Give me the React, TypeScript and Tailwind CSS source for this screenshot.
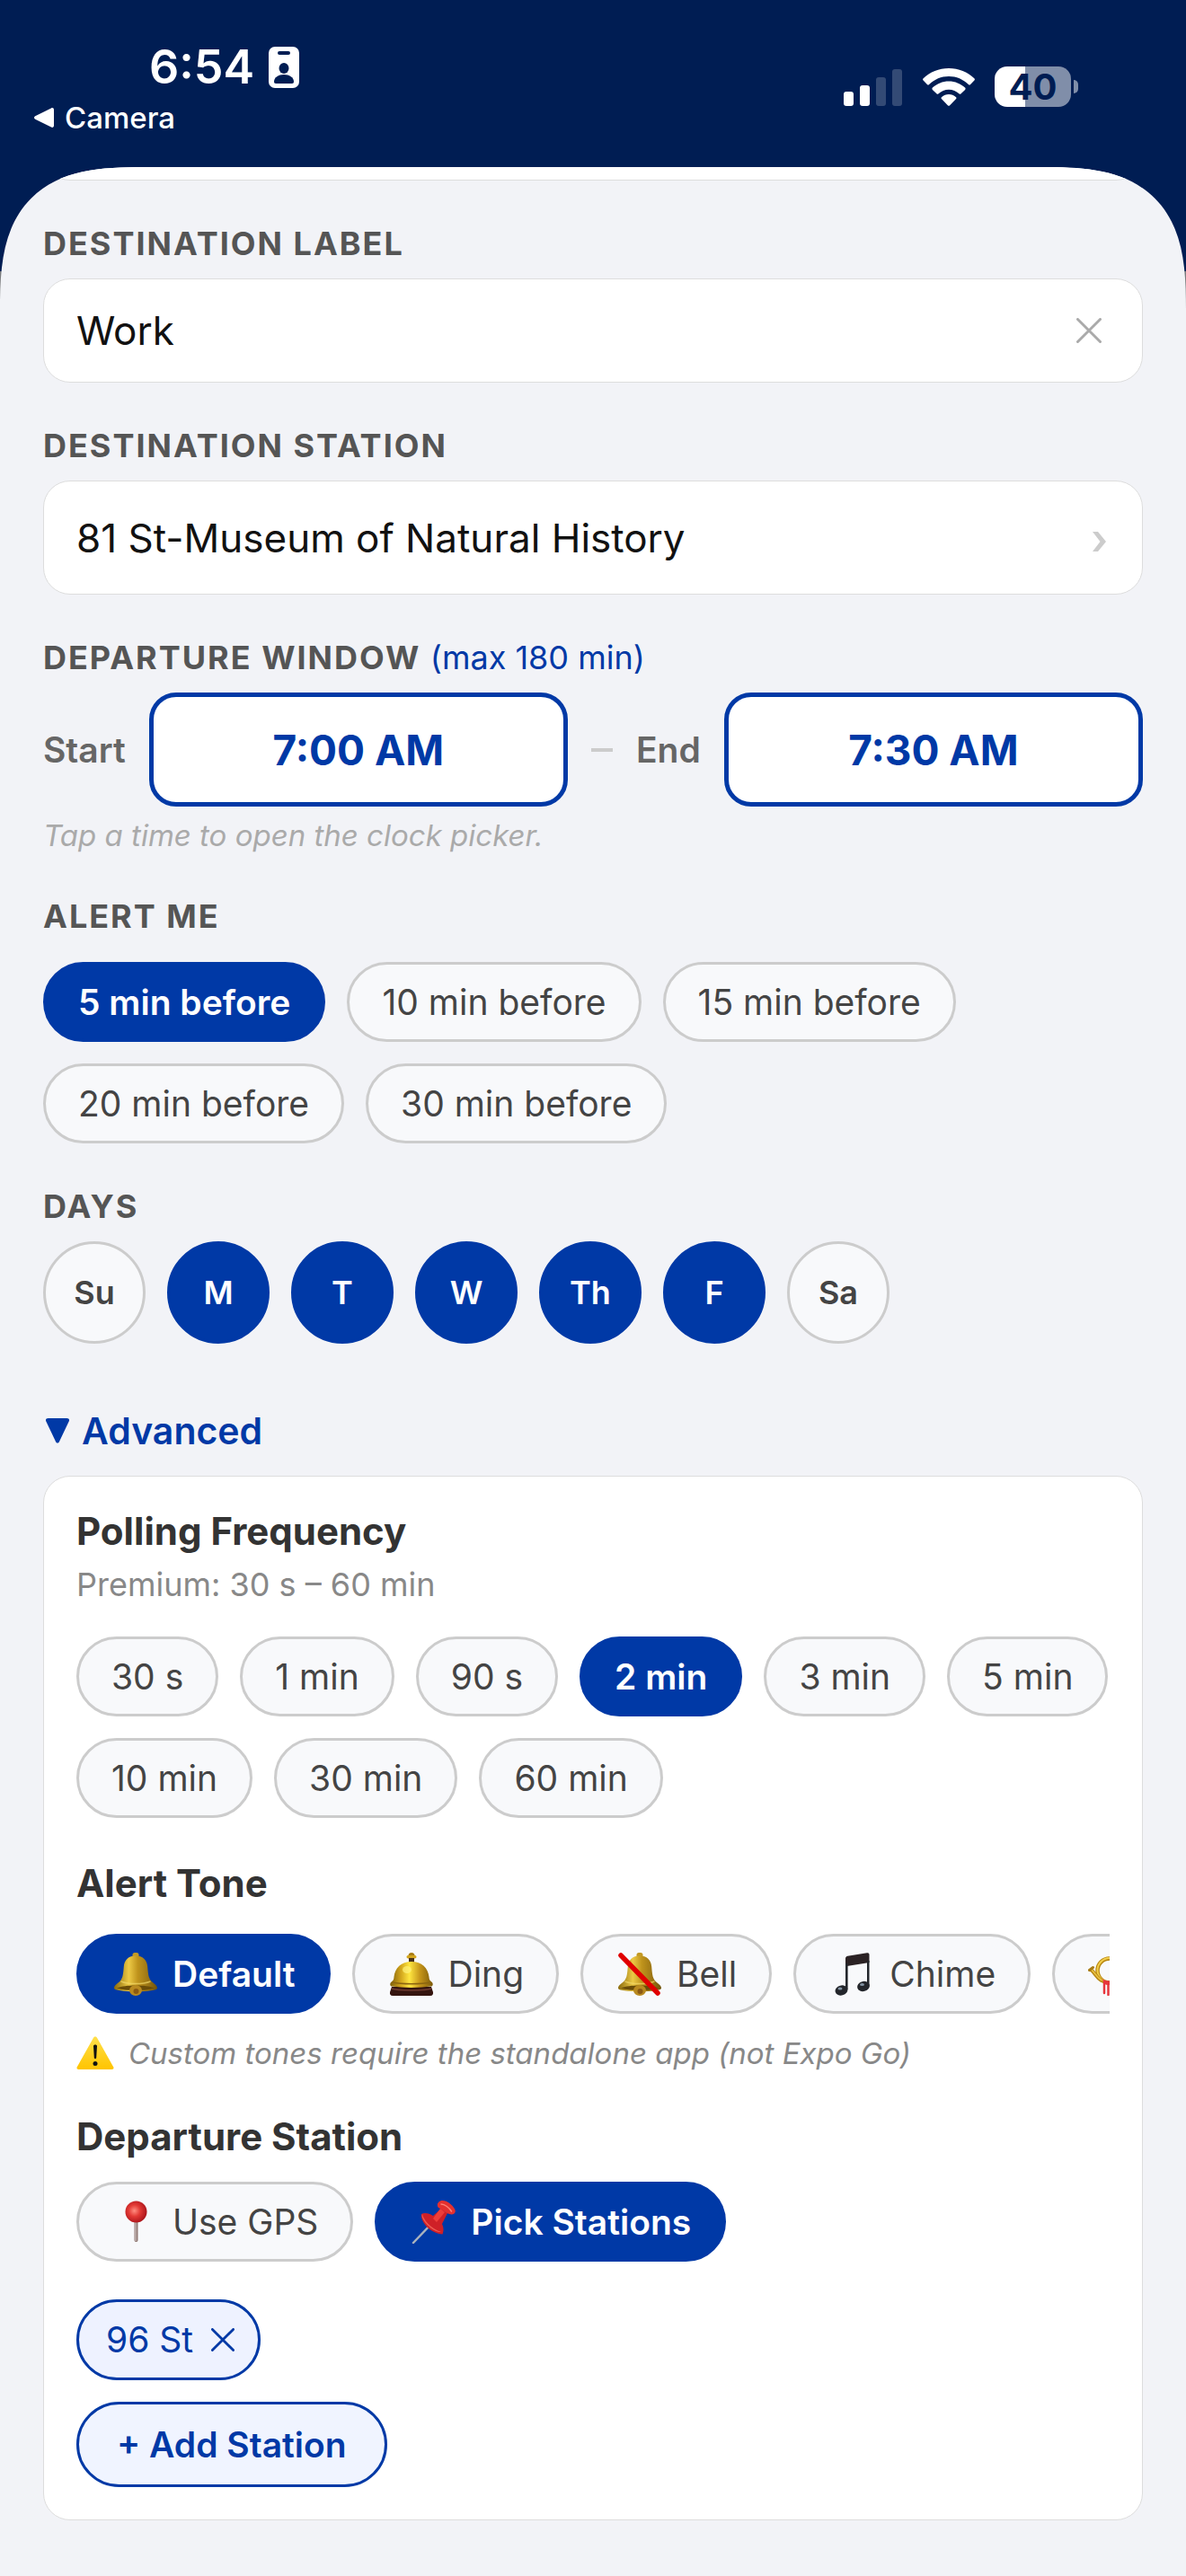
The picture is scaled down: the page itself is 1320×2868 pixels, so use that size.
import React, { useState } from "react";
import clsx from "clsx";

const ALERTS = ["5 min before", "10 min before", "15 min before", "20 min before", "30 min before"];
const DAYS = ["Su", "M", "T", "W", "Th", "F", "Sa"];
const FREQUENCIES = ["30 s", "1 min", "90 s", "2 min", "3 min", "5 min", "10 min", "30 min", "60 min"];

function BadgeIcon() {
  return (
    <svg width="34" height="46" viewBox="0 0 34 46" aria-hidden="true">
      <rect width="34" height="46" rx="7" fill="#fff" />
      <rect x="10" y="5" width="14" height="4" rx="2" fill="#001d53" />
      <ellipse cx="17" cy="24" rx="5.500" ry="6" fill="#001d53" />
      <path d="M6 39c0-5 5-8 11-8s11 3 11 8c0 1-.6 2-2 2H8c-1.400 0-2-1-2-2z" fill="#001d53" />
    </svg>
  );
}

function SignalIcon() {
  return (
    <svg width="65" height="42" viewBox="0 0 65 42" aria-hidden="true" fill="#fff">
      <rect x="0" y="26" width="11" height="16" rx="3" />
      <rect x="18" y="19" width="11" height="23" rx="3" />
      <rect x="36" y="10" width="11" height="32" rx="3" opacity=".2" />
      <rect x="54" y="1" width="11" height="41" rx="3" opacity=".2" />
    </svg>
  );
}

function WifiIcon() {
  return (
    <svg width="58" height="42" viewBox="0 0 58 42" aria-hidden="true" fill="#fff">
      <path d="M29 0C18 0 8 4.200.7 11.300c-.8.8-.8 1.500-.1 2.300l4.300 4.400c.7.700 1.500.7 2.200 0C13 12.300 20.600 9 29 9s16 3.300 21.900 9c.7.700 1.500.7 2.200 0l4.300-4.400c.7-.8.7-1.500-.1-2.300C50 4.200 40 0 29 0z" />
      <path d="M29 14.500c-7 0-13.300 2.700-18 7.100-.8.800-.8 1.500-.1 2.300l4.500 4.400c.7.700 1.400.7 2.200 0 3-2.800 7-4.600 11.400-4.600s8.400 1.800 11.400 4.600c.8.700 1.500.7 2.200 0l4.500-4.400c.7-.8.7-1.500-.1-2.300-4.700-4.400-11-7.100-18-7.100z" />
      <path d="M29 29c-3 0-5.700 1.100-7.800 2.900-.9.800-.9 1.600-.1 2.400l6.700 6.900c.8.800 1.600.8 2.400 0l6.700-6.900c.8-.8.8-1.600-.1-2.400C34.700 30.100 32 29 29 29z" />
    </svg>
  );
}

function CrossIcon({ size, stroke }: { size: number; stroke: number }) {
  return (
    <svg width={size} height={size} viewBox="0 0 28 28" aria-hidden="true" fill="none" stroke="currentColor" strokeWidth={stroke} strokeLinecap="round">
      <path d="M1.500 1.500l25 25M26.500 1.500l-25 25" />
    </svg>
  );
}

function BellIcon({ muted = false }: { muted?: boolean }) {
  const id = muted ? "bell-muted" : "bell";
  return (
    <svg width="48" height="48" viewBox="0 0 48 48" aria-hidden="true">
      <defs>
        <linearGradient id={id} x1="0" x2="1">
          <stop offset="0" stopColor="#8a6a0c" />
          <stop offset=".34" stopColor="#ecc945" />
          <stop offset=".55" stopColor="#bf931c" />
          <stop offset=".8" stopColor="#9a7414" />
          <stop offset="1" stopColor="#6f520a" />
        </linearGradient>
      </defs>
      <rect x="20.500" y="0" width="7" height="6" rx="2.500" fill="#c39a24" />
      <path d="M24 3.500c8 0 12.500 4.500 13.200 12 .6 7 .9 12 3.600 15.500 2.200 3 7.200 5 7.200 8.500 0 2.500-11 3.800-24 3.800S0 42 0 39.500C0 36 5 34 7.200 31c2.700-3.500 3-8.500 3.600-15.500.7-7.500 5.200-12 13.200-12z" fill={`url(#${id})`} />
      <path d="M3 39.500c6-2.300 12-3 21-3s15 .7 21 3c-6 1.800-12 2.500-21 2.500s-15-.7-21-2.500z" fill="#6b4d08" />
      <path d="M7.500 32c5 2 10 2.600 16.500 2.600S35.500 34 40.500 32" fill="none" stroke="#f1d768" strokeWidth="1.500" opacity=".7" />
      <ellipse cx="24" cy="42" rx="7" ry="6" fill="#b98a20" />
      <circle cx="24.500" cy="43" r="3" fill="#8b5a14" />
      {muted && <path d="M3 3l41 42" stroke="#e00000" strokeWidth="5.500" strokeLinecap="round" />}
    </svg>
  );
}

function DingIcon() {
  return (
    <svg width="50" height="48" viewBox="0 0 50 48" aria-hidden="true">
      <defs>
        <linearGradient id="ding" x1="0" x2="1">
          <stop offset="0" stopColor="#7f6008" />
          <stop offset=".25" stopColor="#d2a51c" />
          <stop offset=".45" stopColor="#ffe640" />
          <stop offset=".7" stopColor="#c5951a" />
          <stop offset="1" stopColor="#7c5a0a" />
        </linearGradient>
      </defs>
      <circle cx="25" cy="3.500" r="3.500" fill="#a87c10" />
      <rect x="19.500" y="3" width="11" height="3.500" rx="1.700" fill="#d3a51d" />
      <rect x="22" y="6" width="6" height="6" fill="#47301a" />
      <path d="M3 38h44l2 6c.4 2-.6 4-3 4H4c-2.400 0-3.400-2-3-4z" fill="#35150f" />
      <path d="M3 40c6 2.500 38 2.500 44 0" stroke="#6d3a30" strokeWidth="1.500" fill="none" />
      <path d="M25 10c11.500 0 18.500 7 19.500 17 .2 3 .8 4 2.500 5.200 2.600 1.800 2.200 5-.5 5.400-12 1.700-31 1.700-43 0C.8 37.200.4 34 3 32.200c1.700-1.200 2.300-2.200 2.500-5.200 1-10 8-17 19.500-17z" fill="url(#ding)" />
      <path d="M3.500 33c10 2.300 33 2.300 43 0" stroke="#8b6510" strokeWidth="1.500" fill="none" />
      <ellipse cx="20" cy="19" rx="5" ry="4" fill="#fff27a" opacity=".7" />
    </svg>
  );
}

function ChimeIcon() {
  return (
    <svg width="46" height="48" viewBox="0 0 46 48" aria-hidden="true" fill="#23262b">
      <path d="M15 6.500C15 5 16 4 17.500 3.700L39 .2c1.500-.3 2.500.4 2.500 2V11L15 15.200z" fill="#2b2224" />
      <path d="M15 12h2.600v29H15zM39 9h2.500v28H39z" />
      <ellipse cx="10.500" cy="42" rx="7" ry="5.500" transform="rotate(-15 10.500 42)" />
      <ellipse cx="35" cy="37.500" rx="7" ry="5.500" transform="rotate(-15 35 37.500)" />
      <ellipse cx="9" cy="40" rx="2.500" ry="1.500" fill="#8393a3" />
      <ellipse cx="33.500" cy="35.500" rx="2.500" ry="1.500" fill="#8393a3" />
    </svg>
  );
}

function HornIcon() {
  return (
    <svg width="52" height="48" viewBox="0 0 52 48" aria-hidden="true" fill="none">
      <path d="M37 26l13 8V12z" fill="#d9a526" />
      <circle cx="24" cy="20" r="13.500" stroke="#b8860f" strokeWidth="4.500" />
      <circle cx="24" cy="19.500" r="13.500" stroke="#f2cf4d" strokeWidth="2" />
      <path d="M2.500 18.500c5 3 6 9 13 13" stroke="#b88716" strokeWidth="4" />
      <path d="M2.500 18c5 3 6 9 13 13" stroke="#ebc443" strokeWidth="1.500" />
      <path d="M1.500 19.500l4-3" stroke="#a87c14" strokeWidth="3" strokeLinecap="round" />
      <path d="M16 29.500c4 2.500 12 2.500 16 0l-1.500 5.500c-4 1.500-9 1.500-13-.5z" fill="#e6353c" />
      <path d="M18 34v11M22.500 35v12M27 35v11" stroke="#e6353c" strokeWidth="2.500" strokeLinecap="round" />
    </svg>
  );
}

function RoundPinIcon() {
  return (
    <svg width="48" height="48" viewBox="0 0 48 48" aria-hidden="true">
      <defs>
        <radialGradient id="round-pin" cx=".42" cy=".45" r=".6">
          <stop offset="0" stopColor="#ff8d80" />
          <stop offset=".45" stopColor="#e33a35" />
          <stop offset="1" stopColor="#a81219" />
        </radialGradient>
      </defs>
      <path d="M22.500 20h4v24c0 1.500-1 2-2 2s-2-.5-2-2z" fill="#917b76" />
      <path d="M24 22v23" stroke="#d8cfcc" strokeWidth="1" />
      <circle cx="24.500" cy="12.500" r="12" fill="url(#round-pin)" />
    </svg>
  );
}

function PushPinIcon() {
  return (
    <svg width="50" height="48" viewBox="0 0 50 48" aria-hidden="true">
      <path d="M24 24L2 47" stroke="#a9b3bd" strokeWidth="2.500" strokeLinecap="round" />
      <path d="M11 15c3-2 9-1 13 2l9-8 7 5-6 12c2 4 2 8 .5 11.500-6-.5-12.500-3.500-17-7.800C14 26 10 20 11 15z" fill="#cf2027" />
      <path d="M30 2c3-3.500 9-2 13.500 2s7 8 4 10.500c-2 1.500-5 1-8-.5L29.500 7.500C28.500 5.500 28.500 3.500 30 2z" fill="#e3302f" />
      <path d="M12 15c1 6 9 16 21 20-2 .5-9-1.500-14.500-7S10.500 17 12 15z" fill="#ef5a50" />
      <path d="M24 20l8-11 5 4-9 11z" fill="#ee3e3a" />
      <path d="M33 4c4 0 9 4 11.500 8" stroke="#ff8074" strokeWidth="1.500" fill="none" strokeLinecap="round" />
    </svg>
  );
}

function WarningIcon() {
  return (
    <svg width="42" height="38" viewBox="0 0 42 38" aria-hidden="true">
      <defs>
        <linearGradient id="warning" x1="0" y1="0" x2="0" y2="1">
          <stop offset="0" stopColor="#ffe04a" />
          <stop offset="1" stopColor="#ffc400" />
        </linearGradient>
      </defs>
      <path d="M19 1.800c.9-1.700 3.100-1.700 4 0l18.200 32.400c.8 1.500 0 2.800-1.700 2.800h-37C.8 37 0 35.700.8 34.200z" fill="url(#warning)" />
      <path d="M19 11c0-2 4-2 4 0l-.8 13c-.1 1.400-2.300 1.400-2.400 0z" fill="#111" />
      <circle cx="21" cy="30.500" r="2.500" fill="#111" />
    </svg>
  );
}

const TONES = [
  { name: "Default", icon: <BellIcon /> },
  { name: "Ding", icon: <DingIcon /> },
  { name: "Bell", icon: <BellIcon muted /> },
  { name: "Chime", icon: <ChimeIcon /> },
];

const SOURCES = [
  { name: "Use GPS", icon: <RoundPinIcon /> },
  { name: "Pick Stations", icon: <PushPinIcon /> },
];

type PillProps = {
  selected: boolean;
  onClick: () => void;
  icon?: React.ReactNode;
  title?: string;
  children?: React.ReactNode;
};

function Pill({ selected, onClick, icon, title, children }: PillProps) {
  return (
    <button
      type="button"
      aria-pressed={selected}
      aria-label={title}
      onClick={onClick}
      className={clsx(
        "flex h-[89px] shrink-0 items-center gap-3.5 rounded-full border-3 px-9 text-[39px] leading-[48px] whitespace-nowrap",
        selected ? "border-[#0039a6] bg-[#0039a6] font-semibold text-white" : "border-[#ccc] bg-[#f8f9fb] text-[#444]"
      )}
    >
      {icon && <span className="flex w-[54px] justify-center">{icon}</span>}
      {children}
    </button>
  );
}

const labelClass = "text-[36px] leading-[44px] font-bold tracking-[2px] text-[#555]";
const titleClass = "text-[42px] leading-[50px] font-bold text-[#333]";
const timeLabelClass = "text-[39px] leading-[48px] font-semibold text-[#666]";
const timeClass =
  "h-[127px] flex-1 rounded-[30px] border-5 border-[#0039a6] bg-white text-[46px] leading-[58px] font-bold text-[#0039a6]";

function StatusBar() {
  return (
    <header className="flex items-start justify-between pt-[45px] pr-[120px] pb-[33px] pl-[38px] text-white">
      <div className="flex flex-col">
        <div className="flex items-center gap-4 pl-32">
          <span className="text-[52px] leading-[60px] font-semibold">6:54</span>
          <BadgeIcon />
        </div>
        <a href="#camera" className="flex items-center gap-3 pt-1 text-[33px] leading-[44px] font-medium">
          <svg width="22" height="22" viewBox="0 0 22 22" aria-hidden="true" fill="currentColor">
            <path d="M1.200 9.300L19 .4c1.500-.8 3 0 3 1.800v17.600c0 1.800-1.500 2.600-3 1.800L1.200 12.700c-1.600-.8-1.600-2.600 0-3.400z" />
          </svg>
          Camera
        </a>
      </div>
      <div className="flex items-center pt-[29px]">
        <SignalIcon />
        <span className="pr-[22px] pl-[23px]">
          <WifiIcon />
        </span>
        <span className="flex h-[45px] w-[85px] items-center justify-center rounded-[14px] bg-[linear-gradient(90deg,#fff_40%,#808ea9_40%)] text-[40px] leading-[45px] font-bold text-[#001d53]">
          40
        </span>
        <span className="ml-[3px] h-[15px] w-[5px] rounded-r-full bg-[#808ea9]" />
      </div>
    </header>
  );
}

export default function App() {
  const [label, setLabel] = useState("Work");
  const [alert, setAlert] = useState("5 min before");
  const [days, setDays] = useState(["M", "T", "W", "Th", "F"]);
  const [advanced, setAdvanced] = useState(true);
  const [frequency, setFrequency] = useState("2 min");
  const [tone, setTone] = useState("Default");
  const [source, setSource] = useState("Pick Stations");
  const [stations, setStations] = useState(["96 St"]);

  const toggleDay = (day: string) =>
    setDays((prev) => (prev.includes(day) ? prev.filter((d) => d !== day) : [...prev, day]));

  return (
    <div className="flex min-h-screen flex-col bg-[linear-gradient(#001d53_302px,#797a7c_302px)] font-[Inter,sans-serif]">
      <StatusBar />

      <main className="flex-1 overflow-hidden rounded-t-[118px] bg-[#f2f3f7] px-12 pb-[62px] [corner-shape:superellipse(1.5)] supports-[corner-shape:squircle]:rounded-t-[160px]">
        {/* tail of the card that is scrolled under the sheet's edge */}
        <div className="flex h-[15px] flex-col justify-end overflow-hidden">
          <div className="h-20 shrink-0 rounded-[30px] border border-[#ddd] bg-white" />
        </div>

        <section className="pt-12">
          <label htmlFor="destination-label" className={clsx("block", labelClass)}>
            DESTINATION LABEL
          </label>
          <div className="mt-[17px] flex h-[116px] items-center justify-between rounded-[30px] border border-[#ddd] bg-white pr-[45px] pl-9">
            <input
              id="destination-label"
              value={label}
              onChange={(e) => setLabel(e.target.value)}
              className="min-w-0 flex-1 bg-transparent text-[44px] leading-[56px] text-[#111] outline-none"
            />
            <button type="button" aria-label="Clear label" onClick={() => setLabel("")} className="text-[#aaa]">
              <CrossIcon size={28} stroke={3} />
            </button>
          </div>
        </section>

        <section className="pt-12">
          <h2 id="station-label" className={labelClass}>
            DESTINATION STATION
          </h2>
          <button
            type="button"
            aria-describedby="station-label"
            className="mt-[17px] flex h-[127px] w-full items-center justify-between rounded-[30px] border border-[#ddd] bg-white pr-10 pl-9 text-left text-[44px] leading-[56px] text-[#111]"
          >
            81 St-Museum of Natural History
            <svg width="15" height="22" viewBox="0 0 15 22" aria-hidden="true" className="mt-2">
              <path d="M0 0h6l9 11-9 11H0l8.500-11z" fill="#ccc" />
            </svg>
          </button>
        </section>

        <section className="pt-12">
          <h2 className={labelClass}>
            DEPARTURE WINDOW <span className="font-normal tracking-[0px] text-[#0039a6]">(max 180 min)</span>
          </h2>
          <div className="mt-[17px] flex items-center gap-[26px]">
            <span id="start-label" className={timeLabelClass}>
              Start
            </span>
            <button type="button" aria-describedby="start-label" className={timeClass}>
              7:00 AM
            </button>
            <span className="h-1 w-6 bg-[#ccc]" />
            <span id="end-label" className={timeLabelClass}>
              End
            </span>
            <button type="button" aria-describedby="end-label" className={timeClass}>
              7:30 AM
            </button>
          </div>
          <p className="mt-3 text-[33px] leading-[40px] text-[#aaa] italic">Tap a time to open the clock picker.</p>
        </section>

        <section className="pt-12">
          <h2 className={labelClass}>ALERT ME</h2>
          <div className="mt-[29px] flex flex-wrap gap-6">
            {ALERTS.map((item) => (
              <Pill key={item} selected={item === alert} onClick={() => setAlert(item)}>
                {item}
              </Pill>
            ))}
          </div>
        </section>

        <section className="pt-12">
          <h2 className={labelClass}>DAYS</h2>
          <div className="mt-[17px] flex flex-wrap gap-6">
            {DAYS.map((day) => (
              <button
                key={day}
                type="button"
                aria-pressed={days.includes(day)}
                onClick={() => toggleDay(day)}
                className={clsx(
                  "size-[114px] rounded-full border-3 text-[36px] leading-[44px] font-semibold",
                  days.includes(day) ? "border-[#0039a6] bg-[#0039a6] text-white" : "border-[#ccc] bg-[#f8f9fb] text-[#444]"
                )}
              >
                {day}
              </button>
            ))}
          </div>
        </section>

        <section className="pt-18">
          <button
            type="button"
            aria-expanded={advanced}
            onClick={() => setAdvanced(!advanced)}
            className="flex items-center gap-3.5 pl-[3px] text-[41px] leading-[50px] font-semibold text-[#0039a6]"
          >
            <svg width="26" height="28" viewBox="0 0 26 28" aria-hidden="true" fill="currentColor">
              <path d="M2.500 0h21C25.500 0 26.500 1.500 25.800 3.300L15 26c-.9 2-3.100 2-4 0L.2 3.300C-.5 1.500.5 0 2.500 0z" />
            </svg>
            Advanced
          </button>

          {advanced && (
            <div className="mt-[25px] rounded-[30px] border border-[#ddd] bg-white p-9">
              <h3 className={titleClass}>Polling Frequency</h3>
              <p className="mt-3 text-[36px] leading-[44px] text-[#888]">Premium: 30 s – 60 min</p>
              <div className="mt-9 flex flex-wrap gap-6">
                {FREQUENCIES.map((item) => (
                  <Pill key={item} selected={item === frequency} onClick={() => setFrequency(item)}>
                    {item}
                  </Pill>
                ))}
              </div>

              <h3 className={clsx("mt-12", titleClass)}>Alert Tone</h3>
              <div className="mt-[31px] flex gap-6 overflow-x-auto [scrollbar-width:none]">
                {TONES.map(({ name, icon }) => (
                  <Pill key={name} icon={icon} selected={name === tone} onClick={() => setTone(name)}>
                    {name}
                  </Pill>
                ))}
                <Pill title="Horn" icon={<HornIcon />} selected={tone === "Horn"} onClick={() => setTone("Horn")} />
              </div>
              <p className="mt-6 flex items-center gap-4 text-[33px] leading-[40px] text-[#888] italic">
                <WarningIcon />
                Custom tones require the standalone app (not Expo Go)
              </p>

              <h3 className={clsx("mt-12", titleClass)}>Departure Station</h3>
              <div className="mt-[25px] flex flex-wrap gap-6">
                {SOURCES.map(({ name, icon }) => (
                  <Pill key={name} icon={icon} selected={name === source} onClick={() => setSource(name)}>
                    {name}
                  </Pill>
                ))}
              </div>

              <div className="mt-[42px] flex flex-wrap gap-6">
                {stations.map((station) => (
                  <button
                    key={station}
                    type="button"
                    onClick={() => setStations(stations.filter((s) => s !== station))}
                    className="flex h-[90px] items-center gap-5 rounded-full border-3 border-[#0039a6] bg-[#eef2ff] pr-[26px] pl-[30px] text-[39px] leading-[48px] text-[#0039a6]"
                  >
                    {station}
                    <CrossIcon size={26} stroke={3} />
                  </button>
                ))}
              </div>
              <button
                type="button"
                className="mt-6 flex h-[95px] items-center rounded-full border-3 border-[#0039a6] bg-[#f0f4ff] px-[42px] text-[39px] leading-[48px] font-semibold text-[#0039a6]"
              >
                + Add Station
              </button>
            </div>
          )}
        </section>
      </main>
    </div>
  );
}
